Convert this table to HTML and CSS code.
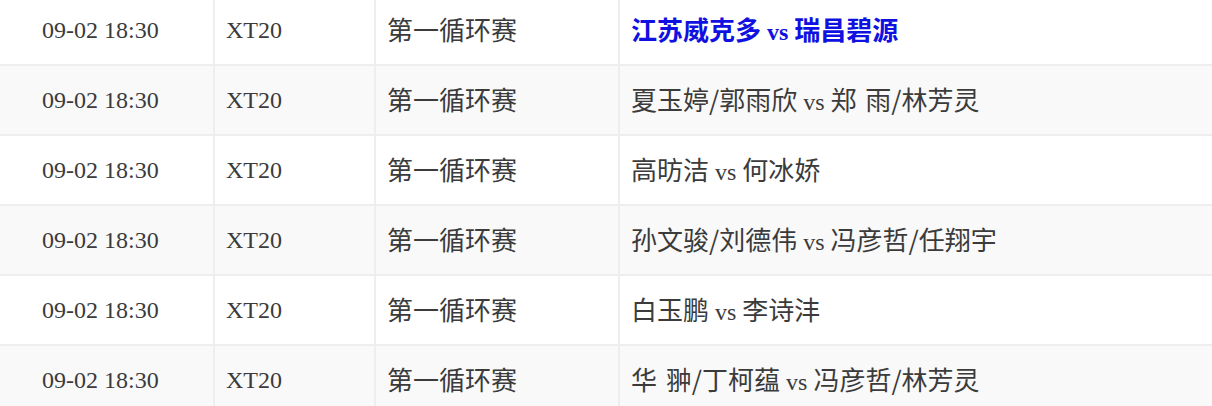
FILE: index.html
```html
<!DOCTYPE html>
<html lang="zh">
<head>
<meta charset="utf-8">
<link rel="stylesheet" href="styles.css">
</head>
<body>
<table class="schedule">
  <colgroup>
    <col class="c-time"><col class="c-type"><col class="c-round"><col class="c-match">
  </colgroup>
  <tbody>
    <tr><td class="time">09-02 18:30</td><td>XT20</td><td><span class="zh">第一循环赛</span></td><td><span class="team-link"><span class="zh">江苏威克多</span> vs <span class="zh">瑞昌碧源</span></span></td></tr>
    <tr><td class="time">09-02 18:30</td><td>XT20</td><td><span class="zh">第一循环赛</span></td><td><span class="zh">夏玉婷/郭雨欣</span> vs <span class="zh">郑 雨/林芳灵</span></td></tr>
    <tr><td class="time">09-02 18:30</td><td>XT20</td><td><span class="zh">第一循环赛</span></td><td><span class="zh">高昉洁</span> vs <span class="zh">何冰娇</span></td></tr>
    <tr><td class="time">09-02 18:30</td><td>XT20</td><td><span class="zh">第一循环赛</span></td><td><span class="zh">孙文骏/刘德伟</span> vs <span class="zh">冯彦哲/任翔宇</span></td></tr>
    <tr><td class="time">09-02 18:30</td><td>XT20</td><td><span class="zh">第一循环赛</span></td><td><span class="zh">白玉鹏</span> vs <span class="zh">李诗沣</span></td></tr>
    <tr><td class="time">09-02 18:30</td><td>XT20</td><td><span class="zh">第一循环赛</span></td><td><span class="zh">华 翀/丁柯蕴</span> vs <span class="zh">冯彦哲/林芳灵</span></td></tr>
  </tbody>
</table>
</body>
</html>
```
FILE: styles.css
```css
html, body {
  margin: 0;
  padding: 0;
  background: #ffffff;
}
body {
  overflow: hidden;
}
.schedule {
  margin-top: -4px;
  width: 1240px;
  table-layout: fixed;
  border-collapse: collapse;
  font-family: "Liberation Serif", "Noto Sans CJK SC", serif;
  font-size: 24px;
  color: #3b3b3b;
}
.c-time { width: 214px; }
.c-type { width: 161px; }
.c-round { width: 244px; }
.c-match { width: auto; }
.schedule td {
  height: 68px;
  padding: 0 0 0 11px;
  border-right: 2px solid #eeeeee;
  border-bottom: 2px solid #eeeeee;
  vertical-align: middle;
  white-space: nowrap;
  line-height: 1;
}
.schedule td.time {
  padding-left: 42px;
}
.schedule tr:nth-child(even) td {
  background: #f9f9f9;
}
.zh {
  font-family: "Noto Sans CJK SC", sans-serif;
  font-size: 26px;
  word-spacing: 3px;
  line-height: 1;
}
.team-link {
  color: #1010e0;
  font-weight: bold;
}
```
